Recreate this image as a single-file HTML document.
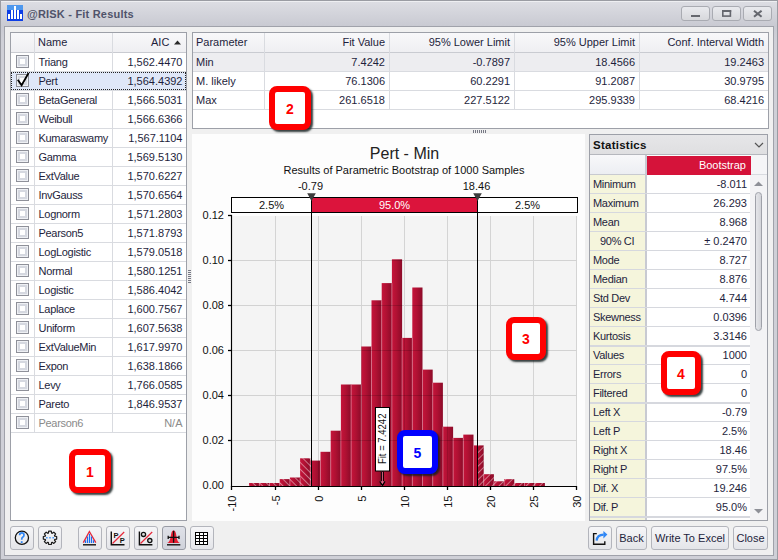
<!DOCTYPE html>
<html><head><meta charset="utf-8">
<style>
*{margin:0;padding:0;box-sizing:border-box}
html,body{width:778px;height:560px;overflow:hidden;background:#d3d4d9;font-family:"Liberation Sans",sans-serif;font-size:11px;color:#1e1e3c}
.a{position:absolute}
#frame{left:0;top:0;width:778px;height:560px;border:1px solid #9a9ca3;background:linear-gradient(#eeeff2 0,#eeeff2 1px,#dcdde3 1px,#c9cad2 25px,#cfd0d7 40px,#cfd0d7)}
#title{left:27px;top:8px;font-weight:bold;font-size:11px;color:#50536a;letter-spacing:0.2px}
.wbtn{top:6px;width:29px;height:15px;border:1px solid #a9abb2;border-radius:3px;background:linear-gradient(#e9eaee,#d7d8dc)}
#content{left:4px;top:26px;width:770px;height:530px;background:#f0f0f0;border:1px solid #a0a2aa}
.grid{background:#fff;border:1px solid #9da0a8}
.hdr{background:linear-gradient(#f8f8fa,#efeff2);border-bottom:1px solid #c9cbd1}
.row{height:19px;border-bottom:1px solid #d9dbe0;white-space:nowrap;line-height:18px}
.cell{position:absolute;top:0;height:18px}
.cb{position:absolute;left:5px;top:2px;width:13px;height:13px;border:1px solid #8e9099;background:#fff;box-shadow:inset 0 0 0 1px #eef0f4,inset 0 0 0 3px #d5d8e0}
.num{text-align:right}
.btn{height:24px;border:1px solid #b3b5bc;border-radius:3px;background:linear-gradient(#f6f6f8,#e4e5e9);text-align:center;line-height:22px;color:#1e1e3c}
.btn.act{background:linear-gradient(#dfe1e8,#d0d3db);border-color:#989ba4}
.callout{border-radius:8px;background:#fff;box-shadow:2px 2px 2px rgba(20,30,30,.85);font-weight:bold;font-size:14px;text-align:center;padding-top:1px}

.lrow{left:11px;width:175px;height:19px;border-bottom:1px solid #d9dbe0;line-height:18px;white-space:nowrap}
.lrow span{top:0}
.lrow.sel{background:#dfe7f8}
.chk{position:absolute;left:6px;top:-1px}
</style></head><body>
<div id="frame" class="a"></div>
<svg class="a" style="left:7px;top:5px" width="16" height="16" viewBox="0 0 16 16">
<defs><linearGradient id="ig" x1="0" y1="0" x2="1" y2="1"><stop offset="0" stop-color="#3d8bf0"/><stop offset="1" stop-color="#0a2fd8"/></linearGradient></defs>
<rect width="16" height="16" fill="#0d3ee6"/><rect width="16" height="5" fill="#4e98ee"/>
<rect x="1" y="9" width="2" height="5" fill="#fff"/><rect x="4" y="5" width="2" height="9" fill="#fff"/><rect x="7" y="1" width="2" height="13" fill="#fff"/><rect x="10" y="5" width="2" height="9" fill="#fff"/><rect x="13" y="9" width="2" height="5" fill="#fff"/>
</svg>
<div id="title" class="a">@RISK - Fit Results</div>
<div class="a wbtn" style="left:681px"></div>
<div class="a wbtn" style="left:712px"></div>
<div class="a wbtn" style="left:743px"></div>
<div id="content" class="a"></div>


<div class="a grid" style="left:10px;top:32px;width:177px;height:489px"></div>
<div class="a hdr" style="left:11px;top:33px;width:175px;height:20px"></div>
<div class="a" style="left:34px;top:33px;width:1px;height:400px;background:#d9dbe0"></div>
<div class="a" style="left:112px;top:33px;width:1px;height:400px;background:#d9dbe0"></div>
<div class="a" style="left:38px;top:33px;line-height:19px">Name</div>
<div class="a" style="left:151px;top:33px;line-height:19px">AIC</div>
<svg class="a" style="left:174px;top:40px" width="7" height="5"><path d="M0 4.5 L3.5 0.5 L7 4.5Z" fill="#2a2a2a"/></svg>
<div id="lrows">
<div class="a lrow" style="top:53px"><div class="cb"></div><span class="a" style="left:27.5px;letter-spacing:-0.3px">Triang</span><span class="a" style="right:3.5px">1,562.4470</span></div>
<div class="a lrow sel" style="top:72px"><div class="cb"></div><svg class="chk" width="16" height="17" viewBox="0 0 16 17"><path d="M0.8 8.8 L4.6 14.3 L11.6 2" stroke="#000" stroke-width="1.8" fill="none"/></svg><span class="a" style="left:27.5px;letter-spacing:-0.3px">Pert</span><span class="a" style="right:3.5px">1,564.4392</span></div>
<div class="a lrow" style="top:91px"><div class="cb"></div><span class="a" style="left:27.5px;letter-spacing:-0.3px">BetaGeneral</span><span class="a" style="right:3.5px">1,566.5031</span></div>
<div class="a lrow" style="top:110px"><div class="cb"></div><span class="a" style="left:27.5px;letter-spacing:-0.3px">Weibull</span><span class="a" style="right:3.5px">1,566.6366</span></div>
<div class="a lrow" style="top:129px"><div class="cb"></div><span class="a" style="left:27.5px;letter-spacing:-0.3px">Kumaraswamy</span><span class="a" style="right:3.5px">1,567.1104</span></div>
<div class="a lrow" style="top:148px"><div class="cb"></div><span class="a" style="left:27.5px;letter-spacing:-0.3px">Gamma</span><span class="a" style="right:3.5px">1,569.5130</span></div>
<div class="a lrow" style="top:167px"><div class="cb"></div><span class="a" style="left:27.5px;letter-spacing:-0.3px">ExtValue</span><span class="a" style="right:3.5px">1,570.6227</span></div>
<div class="a lrow" style="top:186px"><div class="cb"></div><span class="a" style="left:27.5px;letter-spacing:-0.3px">InvGauss</span><span class="a" style="right:3.5px">1,570.6564</span></div>
<div class="a lrow" style="top:205px"><div class="cb"></div><span class="a" style="left:27.5px;letter-spacing:-0.3px">Lognorm</span><span class="a" style="right:3.5px">1,571.2803</span></div>
<div class="a lrow" style="top:224px"><div class="cb"></div><span class="a" style="left:27.5px;letter-spacing:-0.3px">Pearson5</span><span class="a" style="right:3.5px">1,571.8793</span></div>
<div class="a lrow" style="top:243px"><div class="cb"></div><span class="a" style="left:27.5px;letter-spacing:-0.3px">LogLogistic</span><span class="a" style="right:3.5px">1,579.0518</span></div>
<div class="a lrow" style="top:262px"><div class="cb"></div><span class="a" style="left:27.5px;letter-spacing:-0.3px">Normal</span><span class="a" style="right:3.5px">1,580.1251</span></div>
<div class="a lrow" style="top:281px"><div class="cb"></div><span class="a" style="left:27.5px;letter-spacing:-0.3px">Logistic</span><span class="a" style="right:3.5px">1,586.4042</span></div>
<div class="a lrow" style="top:300px"><div class="cb"></div><span class="a" style="left:27.5px;letter-spacing:-0.3px">Laplace</span><span class="a" style="right:3.5px">1,600.7567</span></div>
<div class="a lrow" style="top:319px"><div class="cb"></div><span class="a" style="left:27.5px;letter-spacing:-0.3px">Uniform</span><span class="a" style="right:3.5px">1,607.5638</span></div>
<div class="a lrow" style="top:338px"><div class="cb"></div><span class="a" style="left:27.5px;letter-spacing:-0.3px">ExtValueMin</span><span class="a" style="right:3.5px">1,617.9970</span></div>
<div class="a lrow" style="top:357px"><div class="cb"></div><span class="a" style="left:27.5px;letter-spacing:-0.3px">Expon</span><span class="a" style="right:3.5px">1,638.1866</span></div>
<div class="a lrow" style="top:376px"><div class="cb"></div><span class="a" style="left:27.5px;letter-spacing:-0.3px">Levy</span><span class="a" style="right:3.5px">1,766.0585</span></div>
<div class="a lrow" style="top:395px"><div class="cb"></div><span class="a" style="left:27.5px;letter-spacing:-0.3px">Pareto</span><span class="a" style="right:3.5px">1,846.9537</span></div>
<div class="a lrow" style="top:414px;color:#8a8a8a"><div class="cb"></div><span class="a" style="left:27.5px;letter-spacing:-0.3px">Pearson6</span><span class="a" style="right:3.5px">N/A</span></div>
</div>
<div class="a" style="left:11px;top:72px;width:175px;height:18px;border:1px dotted #222"></div>

<div class="a grid" style="left:192px;top:32px;width:577px;height:97px"></div>
<div class="a hdr" style="left:193px;top:33px;width:575px;height:20px"></div>
<div class="a" style="left:193px;top:53px;width:575px;height:18px;background:#ededf0"></div>
<div class="a" style="left:264px;top:33px;width:1px;height:76px;background:#d9dbe0"></div>
<div class="a" style="left:389px;top:33px;width:1px;height:76px;background:#d9dbe0"></div>
<div class="a" style="left:514px;top:33px;width:1px;height:76px;background:#d9dbe0"></div>
<div class="a" style="left:639px;top:33px;width:1px;height:76px;background:#d9dbe0"></div>
<div class="a" style="left:193px;top:71px;width:575px;height:1px;background:#d9dbe0"></div>
<div class="a" style="left:193px;top:90px;width:575px;height:1px;background:#d9dbe0"></div>
<div class="a" style="left:193px;top:109px;width:575px;height:1px;background:#d9dbe0"></div>
<div class="a" style="left:196px;top:33px;line-height:19px">Parameter</div>
<div class="a" style="left:264px;width:121px;top:33px;line-height:19px;text-align:right">Fit Value</div>
<div class="a" style="left:389px;width:121px;top:33px;line-height:19px;text-align:right">95% Lower Limit</div>
<div class="a" style="left:514px;width:121px;top:33px;line-height:19px;text-align:right">95% Upper Limit</div>
<div class="a" style="left:639px;width:125px;top:33px;line-height:19px;text-align:right">Conf. Interval Width</div>
<div class="a" style="left:196px;top:53px;line-height:19px">Min</div>
<div class="a" style="left:264px;width:121px;top:53px;line-height:19px;text-align:right">7.4242</div>
<div class="a" style="left:389px;width:121px;top:53px;line-height:19px;text-align:right">-0.7897</div>
<div class="a" style="left:514px;width:121px;top:53px;line-height:19px;text-align:right">18.4566</div>
<div class="a" style="left:639px;width:125px;top:53px;line-height:19px;text-align:right">19.2463</div>
<div class="a" style="left:196px;top:72px;line-height:19px">M. likely</div>
<div class="a" style="left:264px;width:121px;top:72px;line-height:19px;text-align:right">76.1306</div>
<div class="a" style="left:389px;width:121px;top:72px;line-height:19px;text-align:right">60.2291</div>
<div class="a" style="left:514px;width:121px;top:72px;line-height:19px;text-align:right">91.2087</div>
<div class="a" style="left:639px;width:125px;top:72px;line-height:19px;text-align:right">30.9795</div>
<div class="a" style="left:196px;top:91px;line-height:19px">Max</div>
<div class="a" style="left:264px;width:121px;top:91px;line-height:19px;text-align:right">261.6518</div>
<div class="a" style="left:389px;width:121px;top:91px;line-height:19px;text-align:right">227.5122</div>
<div class="a" style="left:514px;width:121px;top:91px;line-height:19px;text-align:right">295.9339</div>
<div class="a" style="left:639px;width:125px;top:91px;line-height:19px;text-align:right">68.4216</div>
<!--CHART--><svg class="a" style="left:0;top:0" width="778" height="560" viewBox="0 0 778 560">
<defs>
<linearGradient id="bg" x1="0" y1="0" x2="1" y2="0"><stop offset="0" stop-color="#c6133a"/><stop offset="0.45" stop-color="#b01133"/><stop offset="1" stop-color="#8c0b29"/></linearGradient>
<pattern id="hatchL" patternUnits="userSpaceOnUse" width="4.8" height="6" patternTransform="rotate(-45)"><rect x="0" y="0" width="0.9" height="6" fill="#fff" fill-opacity="0.48"/></pattern>
<pattern id="hatchR" patternUnits="userSpaceOnUse" width="4.8" height="6" patternTransform="rotate(45)"><rect x="0" y="0" width="0.9" height="6" fill="#fff" fill-opacity="0.48"/></pattern>
<clipPath id="cl"><rect x="232" y="200" width="79" height="286"/></clipPath>
<clipPath id="cr"><rect x="478" y="200" width="100" height="286"/></clipPath>
</defs>
<rect x="192" y="134" width="393" height="387" fill="#fdfdfd"/>
<rect x="232" y="216" width="345" height="270" fill="#f4f4f4"/>
<line x1="275.5" y1="216" x2="275.5" y2="486" stroke="#d4d4d4" stroke-width="1"/>
<line x1="318.5" y1="216" x2="318.5" y2="486" stroke="#d4d4d4" stroke-width="1"/>
<line x1="361.5" y1="216" x2="361.5" y2="486" stroke="#d4d4d4" stroke-width="1"/>
<line x1="404.5" y1="216" x2="404.5" y2="486" stroke="#d4d4d4" stroke-width="1"/>
<line x1="447.5" y1="216" x2="447.5" y2="486" stroke="#d4d4d4" stroke-width="1"/>
<line x1="490.5" y1="216" x2="490.5" y2="486" stroke="#d4d4d4" stroke-width="1"/>
<line x1="533.5" y1="216" x2="533.5" y2="486" stroke="#d4d4d4" stroke-width="1"/>
<line x1="576.5" y1="216" x2="576.5" y2="486" stroke="#d4d4d4" stroke-width="1"/>
<line x1="232" y1="440.5" x2="577" y2="440.5" stroke="#d2d2d2" stroke-width="1"/>
<line x1="232" y1="395.5" x2="577" y2="395.5" stroke="#d2d2d2" stroke-width="1"/>
<line x1="232" y1="350.5" x2="577" y2="350.5" stroke="#d2d2d2" stroke-width="1"/>
<line x1="232" y1="305.5" x2="577" y2="305.5" stroke="#d2d2d2" stroke-width="1"/>
<line x1="232" y1="260.5" x2="577" y2="260.5" stroke="#d2d2d2" stroke-width="1"/>
<g><rect x="249.10" y="483.0" width="10.20" height="3.0" fill="url(#bg)"/><rect x="259.30" y="483.0" width="10.20" height="3.0" fill="url(#bg)"/><rect x="269.50" y="483.0" width="10.20" height="3.0" fill="url(#bg)"/><rect x="279.70" y="479.1" width="10.20" height="6.9" fill="url(#bg)"/><rect x="289.90" y="477.5" width="10.20" height="8.5" fill="url(#bg)"/><rect x="300.10" y="458.3" width="10.20" height="27.7" fill="url(#bg)"/><rect x="310.30" y="460.6" width="10.20" height="25.4" fill="url(#bg)"/><rect x="320.50" y="451.8" width="10.20" height="34.2" fill="url(#bg)"/><rect x="330.70" y="430.7" width="10.20" height="55.3" fill="url(#bg)"/><rect x="340.90" y="384.5" width="10.20" height="101.5" fill="url(#bg)"/><rect x="351.10" y="384.5" width="10.20" height="101.5" fill="url(#bg)"/><rect x="361.30" y="346.5" width="10.20" height="139.5" fill="url(#bg)"/><rect x="371.50" y="300.3" width="10.20" height="185.7" fill="url(#bg)"/><rect x="381.70" y="283.1" width="10.20" height="202.9" fill="url(#bg)"/><rect x="391.90" y="259.3" width="10.20" height="226.7" fill="url(#bg)"/><rect x="402.10" y="337.9" width="10.20" height="148.1" fill="url(#bg)"/><rect x="412.30" y="287.5" width="10.20" height="198.5" fill="url(#bg)"/><rect x="422.50" y="369.6" width="10.20" height="116.4" fill="url(#bg)"/><rect x="432.70" y="382.7" width="10.20" height="103.3" fill="url(#bg)"/><rect x="442.90" y="426.7" width="10.20" height="59.3" fill="url(#bg)"/><rect x="453.10" y="437.9" width="10.20" height="48.1" fill="url(#bg)"/><rect x="463.30" y="434.6" width="10.20" height="51.4" fill="url(#bg)"/><rect x="473.50" y="445.4" width="10.20" height="40.6" fill="url(#bg)"/><rect x="483.70" y="474.2" width="10.20" height="11.8" fill="url(#bg)"/><rect x="493.90" y="481.3" width="10.20" height="4.7" fill="url(#bg)"/><rect x="504.10" y="479.2" width="10.20" height="6.8" fill="url(#bg)"/><rect x="514.30" y="483.0" width="10.20" height="3.0" fill="url(#bg)"/><rect x="524.50" y="483.0" width="10.20" height="3.0" fill="url(#bg)"/><rect x="534.70" y="483.0" width="10.20" height="3.0" fill="url(#bg)"/></g>
<g><rect x="258.80" y="483.0" width="1" height="3.0" fill="#d87890" fill-opacity="0.75"/><rect x="269.00" y="483.0" width="1" height="3.0" fill="#d87890" fill-opacity="0.75"/><rect x="279.20" y="483.0" width="1" height="3.0" fill="#d87890" fill-opacity="0.75"/><rect x="289.40" y="479.1" width="1" height="6.9" fill="#d87890" fill-opacity="0.75"/><rect x="299.60" y="477.5" width="1" height="8.5" fill="#d87890" fill-opacity="0.75"/><rect x="309.80" y="460.6" width="1" height="25.4" fill="#d87890" fill-opacity="0.75"/><rect x="320.00" y="460.6" width="1" height="25.4" fill="#d87890" fill-opacity="0.75"/><rect x="330.20" y="451.8" width="1" height="34.2" fill="#d87890" fill-opacity="0.75"/><rect x="340.40" y="430.7" width="1" height="55.3" fill="#d87890" fill-opacity="0.75"/><rect x="350.60" y="384.5" width="1" height="101.5" fill="#d87890" fill-opacity="0.75"/><rect x="360.80" y="384.5" width="1" height="101.5" fill="#d87890" fill-opacity="0.75"/><rect x="371.00" y="346.5" width="1" height="139.5" fill="#d87890" fill-opacity="0.75"/><rect x="381.20" y="300.3" width="1" height="185.7" fill="#d87890" fill-opacity="0.75"/><rect x="391.40" y="283.1" width="1" height="202.9" fill="#d87890" fill-opacity="0.75"/><rect x="401.60" y="337.9" width="1" height="148.1" fill="#d87890" fill-opacity="0.75"/><rect x="411.80" y="337.9" width="1" height="148.1" fill="#d87890" fill-opacity="0.75"/><rect x="422.00" y="369.6" width="1" height="116.4" fill="#d87890" fill-opacity="0.75"/><rect x="432.20" y="382.7" width="1" height="103.3" fill="#d87890" fill-opacity="0.75"/><rect x="442.40" y="426.7" width="1" height="59.3" fill="#d87890" fill-opacity="0.75"/><rect x="452.60" y="437.9" width="1" height="48.1" fill="#d87890" fill-opacity="0.75"/><rect x="462.80" y="437.9" width="1" height="48.1" fill="#d87890" fill-opacity="0.75"/><rect x="473.00" y="445.4" width="1" height="40.6" fill="#d87890" fill-opacity="0.75"/><rect x="483.20" y="474.2" width="1" height="11.8" fill="#d87890" fill-opacity="0.75"/><rect x="493.40" y="481.3" width="1" height="4.7" fill="#d87890" fill-opacity="0.75"/><rect x="503.60" y="481.3" width="1" height="4.7" fill="#d87890" fill-opacity="0.75"/><rect x="513.80" y="483.0" width="1" height="3.0" fill="#d87890" fill-opacity="0.75"/><rect x="524.00" y="483.0" width="1" height="3.0" fill="#d87890" fill-opacity="0.75"/><rect x="534.20" y="483.0" width="1" height="3.0" fill="#d87890" fill-opacity="0.75"/></g>
<g clip-path="url(#cl)"><rect x="249.10" y="483.0" width="10.20" height="3.0" fill="url(#hatchL)"/><rect x="259.30" y="483.0" width="10.20" height="3.0" fill="url(#hatchL)"/><rect x="269.50" y="483.0" width="10.20" height="3.0" fill="url(#hatchL)"/><rect x="279.70" y="479.1" width="10.20" height="6.9" fill="url(#hatchL)"/><rect x="289.90" y="477.5" width="10.20" height="8.5" fill="url(#hatchL)"/><rect x="300.10" y="458.3" width="10.20" height="27.7" fill="url(#hatchL)"/><rect x="310.30" y="460.6" width="10.20" height="25.4" fill="url(#hatchL)"/><rect x="320.50" y="451.8" width="10.20" height="34.2" fill="url(#hatchL)"/><rect x="330.70" y="430.7" width="10.20" height="55.3" fill="url(#hatchL)"/><rect x="340.90" y="384.5" width="10.20" height="101.5" fill="url(#hatchL)"/><rect x="351.10" y="384.5" width="10.20" height="101.5" fill="url(#hatchL)"/><rect x="361.30" y="346.5" width="10.20" height="139.5" fill="url(#hatchL)"/><rect x="371.50" y="300.3" width="10.20" height="185.7" fill="url(#hatchL)"/><rect x="381.70" y="283.1" width="10.20" height="202.9" fill="url(#hatchL)"/><rect x="391.90" y="259.3" width="10.20" height="226.7" fill="url(#hatchL)"/><rect x="402.10" y="337.9" width="10.20" height="148.1" fill="url(#hatchL)"/><rect x="412.30" y="287.5" width="10.20" height="198.5" fill="url(#hatchL)"/><rect x="422.50" y="369.6" width="10.20" height="116.4" fill="url(#hatchL)"/><rect x="432.70" y="382.7" width="10.20" height="103.3" fill="url(#hatchL)"/><rect x="442.90" y="426.7" width="10.20" height="59.3" fill="url(#hatchL)"/><rect x="453.10" y="437.9" width="10.20" height="48.1" fill="url(#hatchL)"/><rect x="463.30" y="434.6" width="10.20" height="51.4" fill="url(#hatchL)"/><rect x="473.50" y="445.4" width="10.20" height="40.6" fill="url(#hatchL)"/><rect x="483.70" y="474.2" width="10.20" height="11.8" fill="url(#hatchL)"/><rect x="493.90" y="481.3" width="10.20" height="4.7" fill="url(#hatchL)"/><rect x="504.10" y="479.2" width="10.20" height="6.8" fill="url(#hatchL)"/><rect x="514.30" y="483.0" width="10.20" height="3.0" fill="url(#hatchL)"/><rect x="524.50" y="483.0" width="10.20" height="3.0" fill="url(#hatchL)"/><rect x="534.70" y="483.0" width="10.20" height="3.0" fill="url(#hatchL)"/></g>
<g clip-path="url(#cr)"><rect x="249.10" y="483.0" width="10.20" height="3.0" fill="url(#hatchR)"/><rect x="259.30" y="483.0" width="10.20" height="3.0" fill="url(#hatchR)"/><rect x="269.50" y="483.0" width="10.20" height="3.0" fill="url(#hatchR)"/><rect x="279.70" y="479.1" width="10.20" height="6.9" fill="url(#hatchR)"/><rect x="289.90" y="477.5" width="10.20" height="8.5" fill="url(#hatchR)"/><rect x="300.10" y="458.3" width="10.20" height="27.7" fill="url(#hatchR)"/><rect x="310.30" y="460.6" width="10.20" height="25.4" fill="url(#hatchR)"/><rect x="320.50" y="451.8" width="10.20" height="34.2" fill="url(#hatchR)"/><rect x="330.70" y="430.7" width="10.20" height="55.3" fill="url(#hatchR)"/><rect x="340.90" y="384.5" width="10.20" height="101.5" fill="url(#hatchR)"/><rect x="351.10" y="384.5" width="10.20" height="101.5" fill="url(#hatchR)"/><rect x="361.30" y="346.5" width="10.20" height="139.5" fill="url(#hatchR)"/><rect x="371.50" y="300.3" width="10.20" height="185.7" fill="url(#hatchR)"/><rect x="381.70" y="283.1" width="10.20" height="202.9" fill="url(#hatchR)"/><rect x="391.90" y="259.3" width="10.20" height="226.7" fill="url(#hatchR)"/><rect x="402.10" y="337.9" width="10.20" height="148.1" fill="url(#hatchR)"/><rect x="412.30" y="287.5" width="10.20" height="198.5" fill="url(#hatchR)"/><rect x="422.50" y="369.6" width="10.20" height="116.4" fill="url(#hatchR)"/><rect x="432.70" y="382.7" width="10.20" height="103.3" fill="url(#hatchR)"/><rect x="442.90" y="426.7" width="10.20" height="59.3" fill="url(#hatchR)"/><rect x="453.10" y="437.9" width="10.20" height="48.1" fill="url(#hatchR)"/><rect x="463.30" y="434.6" width="10.20" height="51.4" fill="url(#hatchR)"/><rect x="473.50" y="445.4" width="10.20" height="40.6" fill="url(#hatchR)"/><rect x="483.70" y="474.2" width="10.20" height="11.8" fill="url(#hatchR)"/><rect x="493.90" y="481.3" width="10.20" height="4.7" fill="url(#hatchR)"/><rect x="504.10" y="479.2" width="10.20" height="6.8" fill="url(#hatchR)"/><rect x="514.30" y="483.0" width="10.20" height="3.0" fill="url(#hatchR)"/><rect x="524.50" y="483.0" width="10.20" height="3.0" fill="url(#hatchR)"/><rect x="534.70" y="483.0" width="10.20" height="3.0" fill="url(#hatchR)"/></g>
<clipPath id="cbars"><rect x="249.10" y="483.0" width="10.20" height="3.0"/><rect x="259.30" y="483.0" width="10.20" height="3.0"/><rect x="269.50" y="483.0" width="10.20" height="3.0"/><rect x="279.70" y="479.1" width="10.20" height="6.9"/><rect x="289.90" y="477.5" width="10.20" height="8.5"/><rect x="300.10" y="458.3" width="10.20" height="27.7"/><rect x="310.30" y="460.6" width="10.20" height="25.4"/><rect x="320.50" y="451.8" width="10.20" height="34.2"/><rect x="330.70" y="430.7" width="10.20" height="55.3"/><rect x="340.90" y="384.5" width="10.20" height="101.5"/><rect x="351.10" y="384.5" width="10.20" height="101.5"/><rect x="361.30" y="346.5" width="10.20" height="139.5"/><rect x="371.50" y="300.3" width="10.20" height="185.7"/><rect x="381.70" y="283.1" width="10.20" height="202.9"/><rect x="391.90" y="259.3" width="10.20" height="226.7"/><rect x="402.10" y="337.9" width="10.20" height="148.1"/><rect x="412.30" y="287.5" width="10.20" height="198.5"/><rect x="422.50" y="369.6" width="10.20" height="116.4"/><rect x="432.70" y="382.7" width="10.20" height="103.3"/><rect x="442.90" y="426.7" width="10.20" height="59.3"/><rect x="453.10" y="437.9" width="10.20" height="48.1"/><rect x="463.30" y="434.6" width="10.20" height="51.4"/><rect x="473.50" y="445.4" width="10.20" height="40.6"/><rect x="483.70" y="474.2" width="10.20" height="11.8"/><rect x="493.90" y="481.3" width="10.20" height="4.7"/><rect x="504.10" y="479.2" width="10.20" height="6.8"/><rect x="514.30" y="483.0" width="10.20" height="3.0"/><rect x="524.50" y="483.0" width="10.20" height="3.0"/><rect x="534.70" y="483.0" width="10.20" height="3.0"/></clipPath>
<g clip-path="url(#cbars)">
<line x1="232" y1="440.5" x2="577" y2="440.5" stroke="#000" stroke-opacity="0.15" stroke-width="1"/>
<line x1="232" y1="395.5" x2="577" y2="395.5" stroke="#000" stroke-opacity="0.15" stroke-width="1"/>
<line x1="232" y1="350.5" x2="577" y2="350.5" stroke="#000" stroke-opacity="0.15" stroke-width="1"/>
<line x1="232" y1="305.5" x2="577" y2="305.5" stroke="#000" stroke-opacity="0.15" stroke-width="1"/>
<line x1="232" y1="260.5" x2="577" y2="260.5" stroke="#000" stroke-opacity="0.15" stroke-width="1"/>
<line x1="275.5" y1="216" x2="275.5" y2="486" stroke="#000" stroke-opacity="0.12" stroke-width="1"/>
<line x1="318.5" y1="216" x2="318.5" y2="486" stroke="#000" stroke-opacity="0.12" stroke-width="1"/>
<line x1="361.5" y1="216" x2="361.5" y2="486" stroke="#000" stroke-opacity="0.12" stroke-width="1"/>
<line x1="404.5" y1="216" x2="404.5" y2="486" stroke="#000" stroke-opacity="0.12" stroke-width="1"/>
<line x1="447.5" y1="216" x2="447.5" y2="486" stroke="#000" stroke-opacity="0.12" stroke-width="1"/>
<line x1="490.5" y1="216" x2="490.5" y2="486" stroke="#000" stroke-opacity="0.12" stroke-width="1"/>
<line x1="533.5" y1="216" x2="533.5" y2="486" stroke="#000" stroke-opacity="0.12" stroke-width="1"/>
</g>
<line x1="231.5" y1="215" x2="231.5" y2="487" stroke="#000" stroke-width="1.15"/>
<line x1="231" y1="486.5" x2="577" y2="486.5" stroke="#000" stroke-width="1.15"/>
<line x1="231.5" y1="486" x2="231.5" y2="490" stroke="#000" stroke-width="1.3"/>
<text transform="translate(235.5,495.5) rotate(-90)" text-anchor="end" font-size="11" fill="#111">-10</text>
<line x1="275.5" y1="486" x2="275.5" y2="490" stroke="#000" stroke-width="1.3"/>
<text transform="translate(279.5,495.5) rotate(-90)" text-anchor="end" font-size="11" fill="#111">-5</text>
<line x1="318.5" y1="486" x2="318.5" y2="490" stroke="#000" stroke-width="1.3"/>
<text transform="translate(322.5,495.5) rotate(-90)" text-anchor="end" font-size="11" fill="#111">0</text>
<line x1="361.5" y1="486" x2="361.5" y2="490" stroke="#000" stroke-width="1.3"/>
<text transform="translate(365.5,495.5) rotate(-90)" text-anchor="end" font-size="11" fill="#111">5</text>
<line x1="404.5" y1="486" x2="404.5" y2="490" stroke="#000" stroke-width="1.3"/>
<text transform="translate(408.5,495.5) rotate(-90)" text-anchor="end" font-size="11" fill="#111">10</text>
<line x1="447.5" y1="486" x2="447.5" y2="490" stroke="#000" stroke-width="1.3"/>
<text transform="translate(451.5,495.5) rotate(-90)" text-anchor="end" font-size="11" fill="#111">15</text>
<line x1="490.5" y1="486" x2="490.5" y2="490" stroke="#000" stroke-width="1.3"/>
<text transform="translate(494.5,495.5) rotate(-90)" text-anchor="end" font-size="11" fill="#111">20</text>
<line x1="533.5" y1="486" x2="533.5" y2="490" stroke="#000" stroke-width="1.3"/>
<text transform="translate(537.5,495.5) rotate(-90)" text-anchor="end" font-size="11" fill="#111">25</text>
<line x1="576.5" y1="486" x2="576.5" y2="490" stroke="#000" stroke-width="1.3"/>
<text transform="translate(580.5,495.5) rotate(-90)" text-anchor="end" font-size="11" fill="#111">30</text>
<text x="224" y="489.3" text-anchor="end" font-size="11" fill="#111">0.00</text>
<line x1="228" y1="440.5" x2="232" y2="440.5" stroke="#000" stroke-width="1.3"/>
<text x="224" y="444.3" text-anchor="end" font-size="11" fill="#111">0.02</text>
<line x1="228" y1="395.5" x2="232" y2="395.5" stroke="#000" stroke-width="1.3"/>
<text x="224" y="399.3" text-anchor="end" font-size="11" fill="#111">0.04</text>
<line x1="228" y1="350.5" x2="232" y2="350.5" stroke="#000" stroke-width="1.3"/>
<text x="224" y="354.3" text-anchor="end" font-size="11" fill="#111">0.06</text>
<line x1="228" y1="305.5" x2="232" y2="305.5" stroke="#000" stroke-width="1.3"/>
<text x="224" y="309.3" text-anchor="end" font-size="11" fill="#111">0.08</text>
<line x1="228" y1="260.5" x2="232" y2="260.5" stroke="#000" stroke-width="1.3"/>
<text x="224" y="264.3" text-anchor="end" font-size="11" fill="#111">0.10</text>
<line x1="228" y1="215.5" x2="232" y2="215.5" stroke="#000" stroke-width="1.3"/>
<text x="224" y="219.3" text-anchor="end" font-size="11" fill="#111">0.12</text>
<rect x="231.5" y="197.5" width="346" height="15" fill="#fff" stroke="#000" stroke-width="1"/>
<rect x="311.5" y="198" width="166" height="14" fill="#dc143c"/>
<text x="271.5" y="208.6" text-anchor="middle" font-size="11" fill="#111">2.5%</text>
<text x="394.5" y="208.6" text-anchor="middle" font-size="11" fill="#fff">95.0%</text>
<text x="527.5" y="208.6" text-anchor="middle" font-size="11" fill="#111">2.5%</text>
<line x1="311.5" y1="197" x2="311.5" y2="486" stroke="#000" stroke-width="1"/>
<path d="M307.2 193.2 L315.8 193.2 L311.5 201 Z" fill="#3c3c3c"/>
<text x="310.5" y="189.5" text-anchor="middle" font-size="11" fill="#111">-0.79</text>
<line x1="477.5" y1="197" x2="477.5" y2="486" stroke="#000" stroke-width="1"/>
<path d="M473.2 193.2 L481.8 193.2 L477.5 201 Z" fill="#3c3c3c"/>
<text x="476.5" y="189.5" text-anchor="middle" font-size="11" fill="#111">18.46</text>
<text x="404.5" y="158.6" text-anchor="middle" font-size="16" fill="#222">Pert - Min</text>
<text x="404" y="174.4" text-anchor="middle" font-size="11" fill="#111">Results of Parametric Bootstrap of 1000 Samples</text>
<path d="M382.4 471.5 V485" stroke="#000" stroke-width="3"/>
<path d="M379.8 481.3 L382.4 485.5 L385 481.3" stroke="#000" stroke-width="1.3" fill="#e06b8a"/>
<path d="M382.4 472 V483" stroke="#e06b8a" stroke-width="1"/>
<rect x="375.5" y="407.5" width="14" height="63.5" fill="#fff" stroke="#000" stroke-width="1"/>
<text transform="translate(386.3,438.8) rotate(-90)" text-anchor="middle" font-size="11" fill="#111" textLength="50.5" lengthAdjust="spacingAndGlyphs">Fit = 7.4242</text>
<rect x="473" y="130" width="1" height="3" fill="#767884"/>
<rect x="188" y="270" width="3" height="1" fill="#767884"/>
<rect x="475" y="130" width="1" height="3" fill="#767884"/>
<rect x="188" y="272" width="3" height="1" fill="#767884"/>
<rect x="477" y="130" width="1" height="3" fill="#767884"/>
<rect x="188" y="274" width="3" height="1" fill="#767884"/>
<rect x="479" y="130" width="1" height="3" fill="#767884"/>
<rect x="188" y="276" width="3" height="1" fill="#767884"/>
<rect x="481" y="130" width="1" height="3" fill="#767884"/>
<rect x="188" y="278" width="3" height="1" fill="#767884"/>
<rect x="483" y="130" width="1" height="3" fill="#767884"/>
<rect x="188" y="280" width="3" height="1" fill="#767884"/>
<rect x="485" y="130" width="1" height="3" fill="#767884"/>
<rect x="188" y="282" width="3" height="1" fill="#767884"/>
</svg><!--/CHART-->
<!--STATS--><div class="a" style="left:589px;top:134px;width:179px;height:387px;border:1px solid #9da0a8;background:#fff"></div>
<div class="a" style="left:590px;top:135px;width:177px;height:20px;background:linear-gradient(#e6e6e8,#dfdfe1);border-bottom:1px solid #b5b7bd"></div>
<div class="a" style="left:593px;top:135px;line-height:20px;font-weight:bold;font-size:11.5px;letter-spacing:0.25px;color:#111">Statistics</div>
<svg class="a" style="left:754px;top:142px" width="10" height="7"><path d="M1 1 L5 5 L9 1" stroke="#555" stroke-width="1.2" fill="none"/></svg>
<div class="a" style="left:590px;top:155px;width:55px;height:20px;background:linear-gradient(#f8f8fa,#eceef2);border-bottom:1px solid #c8cad0"></div>
<div class="a" style="left:647px;top:156px;width:104px;height:19px;background:#d5133a;color:#fff;text-align:right;padding-right:5px;line-height:18px">Bootstrap</div>
<div class="a" style="left:751px;top:155px;width:16px;height:20px;background:#f5f5f7;border-bottom:1px solid #d8dadf"></div>
<div class="a" style="left:590px;top:175px;width:55px;height:345px;background:#f5f5dc"></div>
<div class="a" style="left:645px;top:155px;width:2px;height:365px;background:#c8cad2"></div>
<div class="a" style="left:593px;top:175px;line-height:18px;letter-spacing:-0.3px">Minimum</div>
<div class="a" style="left:647px;width:100px;top:175px;line-height:18px;text-align:right">-8.011</div>
<div class="a" style="left:590px;top:193px;width:160px;height:1px;background:#d6d8de"></div>
<div class="a" style="left:593px;top:194px;line-height:18px;letter-spacing:-0.3px">Maximum</div>
<div class="a" style="left:647px;width:100px;top:194px;line-height:18px;text-align:right">26.293</div>
<div class="a" style="left:590px;top:212px;width:160px;height:1px;background:#d6d8de"></div>
<div class="a" style="left:593px;top:213px;line-height:18px;letter-spacing:-0.3px">Mean</div>
<div class="a" style="left:647px;width:100px;top:213px;line-height:18px;text-align:right">8.968</div>
<div class="a" style="left:590px;top:231px;width:160px;height:1px;background:#d6d8de"></div>
<div class="a" style="left:600px;top:232px;line-height:18px;letter-spacing:-0.3px">90% CI</div>
<div class="a" style="left:647px;width:100px;top:232px;line-height:18px;text-align:right">&#177; 0.2470</div>
<div class="a" style="left:590px;top:250px;width:160px;height:1px;background:#d6d8de"></div>
<div class="a" style="left:593px;top:251px;line-height:18px;letter-spacing:-0.3px">Mode</div>
<div class="a" style="left:647px;width:100px;top:251px;line-height:18px;text-align:right">8.727</div>
<div class="a" style="left:590px;top:269px;width:160px;height:1px;background:#d6d8de"></div>
<div class="a" style="left:593px;top:270px;line-height:18px;letter-spacing:-0.3px">Median</div>
<div class="a" style="left:647px;width:100px;top:270px;line-height:18px;text-align:right">8.876</div>
<div class="a" style="left:590px;top:288px;width:160px;height:1px;background:#d6d8de"></div>
<div class="a" style="left:593px;top:289px;line-height:18px;letter-spacing:-0.3px">Std Dev</div>
<div class="a" style="left:647px;width:100px;top:289px;line-height:18px;text-align:right">4.744</div>
<div class="a" style="left:590px;top:307px;width:160px;height:1px;background:#d6d8de"></div>
<div class="a" style="left:593px;top:308px;line-height:18px;letter-spacing:-0.3px">Skewness</div>
<div class="a" style="left:647px;width:100px;top:308px;line-height:18px;text-align:right">0.0396</div>
<div class="a" style="left:590px;top:326px;width:160px;height:1px;background:#d6d8de"></div>
<div class="a" style="left:593px;top:327px;line-height:18px;letter-spacing:-0.3px">Kurtosis</div>
<div class="a" style="left:647px;width:100px;top:327px;line-height:18px;text-align:right">3.3146</div>
<div class="a" style="left:590px;top:345px;width:160px;height:2px;background:#d6d8de"></div>
<div class="a" style="left:593px;top:346px;line-height:18px;letter-spacing:-0.3px">Values</div>
<div class="a" style="left:647px;width:100px;top:346px;line-height:18px;text-align:right">1000</div>
<div class="a" style="left:590px;top:364px;width:160px;height:1px;background:#d6d8de"></div>
<div class="a" style="left:593px;top:365px;line-height:18px;letter-spacing:-0.3px">Errors</div>
<div class="a" style="left:647px;width:100px;top:365px;line-height:18px;text-align:right">0</div>
<div class="a" style="left:590px;top:383px;width:160px;height:1px;background:#d6d8de"></div>
<div class="a" style="left:593px;top:384px;line-height:18px;letter-spacing:-0.3px">Filtered</div>
<div class="a" style="left:647px;width:100px;top:384px;line-height:18px;text-align:right">0</div>
<div class="a" style="left:590px;top:402px;width:160px;height:2px;background:#d6d8de"></div>
<div class="a" style="left:593px;top:403px;line-height:18px;letter-spacing:-0.3px">Left X</div>
<div class="a" style="left:647px;width:100px;top:403px;line-height:18px;text-align:right">-0.79</div>
<div class="a" style="left:590px;top:421px;width:160px;height:1px;background:#d6d8de"></div>
<div class="a" style="left:593px;top:422px;line-height:18px;letter-spacing:-0.3px">Left P</div>
<div class="a" style="left:647px;width:100px;top:422px;line-height:18px;text-align:right">2.5%</div>
<div class="a" style="left:590px;top:440px;width:160px;height:1px;background:#d6d8de"></div>
<div class="a" style="left:593px;top:441px;line-height:18px;letter-spacing:-0.3px">Right X</div>
<div class="a" style="left:647px;width:100px;top:441px;line-height:18px;text-align:right">18.46</div>
<div class="a" style="left:590px;top:459px;width:160px;height:1px;background:#d6d8de"></div>
<div class="a" style="left:593px;top:460px;line-height:18px;letter-spacing:-0.3px">Right P</div>
<div class="a" style="left:647px;width:100px;top:460px;line-height:18px;text-align:right">97.5%</div>
<div class="a" style="left:590px;top:478px;width:160px;height:1px;background:#d6d8de"></div>
<div class="a" style="left:593px;top:479px;line-height:18px;letter-spacing:-0.3px">Dif. X</div>
<div class="a" style="left:647px;width:100px;top:479px;line-height:18px;text-align:right">19.246</div>
<div class="a" style="left:590px;top:497px;width:160px;height:1px;background:#d6d8de"></div>
<div class="a" style="left:593px;top:498px;line-height:18px;letter-spacing:-0.3px">Dif. P</div>
<div class="a" style="left:647px;width:100px;top:498px;line-height:18px;text-align:right">95.0%</div>
<div class="a" style="left:590px;top:516px;width:160px;height:1px;background:#d6d8de"></div>
<div class="a" style="left:750px;top:175px;width:17px;height:345px;background:#f3f3f5"></div>
<svg class="a" style="left:754px;top:181px" width="9" height="5"><path d="M0 5 L4.5 0.5 L9 5Z" fill="#8e9097"/></svg>
<div class="a" style="left:755px;top:192px;width:7px;height:139px;border:1px solid #9fa1a9;border-radius:4px;background:linear-gradient(90deg,#e4e5e9,#d3d4d9)"></div>
<svg class="a" style="left:754px;top:509px" width="9" height="5"><path d="M0 0 L4.5 4.5 L9 0Z" fill="#8e9097"/></svg>
<div class="a" style="left:590px;top:516px;width:160px;height:2px;background:#d6d8de"></div><!--/STATS-->
<!--BTNS--><div class="a btn" style="left:10px;top:526px;width:24px"></div>
<div class="a btn" style="left:38px;top:526px;width:24px"></div>
<div class="a btn" style="left:78px;top:526px;width:24px"></div>
<div class="a btn" style="left:106px;top:526px;width:24px"></div>
<div class="a btn" style="left:134px;top:526px;width:24px"></div>
<div class="a btn" style="left:190px;top:526px;width:24px"></div>
<div class="a btn act" style="left:162px;top:526px;width:24px"></div>
<div class="a btn" style="left:588px;top:526px;width:24px"></div>
<div class="a btn" style="left:616px;top:526px;width:31px">Back</div>
<div class="a btn" style="left:651px;top:526px;width:78px">Write To Excel</div>
<div class="a btn" style="left:733px;top:526px;width:35px">Close</div>
<svg class="a" style="left:0;top:0" width="778" height="560" viewBox="0 0 778 560">
<circle cx="21.9" cy="537.8" r="6.6" stroke="#111" stroke-width="1.3" fill="none"/>
<path d="M19.6 535.3 Q19.6 532.9 21.8 532.9 Q24 532.9 24 535 Q24 536.5 22.6 537.3 Q21.7 537.9 21.7 539.8" stroke="#2f86f5" stroke-width="1.7" fill="none"/><rect x="20.8" y="541.2" width="1.8" height="1.8" fill="#2f86f5"/>
<path d="M48.41 533.06 L48.70 531.12 L51.30 531.12 L51.59 533.06 L52.23 533.33 L53.80 532.16 L55.64 534.00 L54.47 535.57 L54.74 536.21 L56.68 536.50 L56.68 539.10 L54.74 539.39 L54.47 540.03 L55.64 541.60 L53.80 543.44 L52.23 542.27 L51.59 542.54 L51.30 544.48 L48.70 544.48 L48.41 542.54 L47.77 542.27 L46.20 543.44 L44.36 541.60 L45.53 540.03 L45.26 539.39 L43.32 539.10 L43.32 536.50 L45.26 536.21 L45.53 535.57 L44.36 534.00 L46.20 532.16 L47.77 533.33 Z" stroke="#1a1a1a" stroke-width="1.2" stroke-linejoin="round" fill="none"/>
<path d="M46 537.8 H47.6 M49.2 537.8 H50.8 M52.4 537.8 H54" stroke="#4a9af5" stroke-width="1.4"/>
<path d="M83.3 542.6 L89.4 531.5 L95.8 542.6" stroke="#e8283a" stroke-width="1.3" fill="none"/>
<path d="M85.5 543 V540.3 M87.5 543 V536.5 M89.5 543 V533.8 M91.5 543 V536.5 M93.5 543 V540.3" stroke="#1a6cf0" stroke-width="1.2"/>
<path d="M83 544.8 H96" stroke="#111" stroke-width="1.4"/>
<path d="M111.3 531.5 V544.8 H124.5" stroke="#111" stroke-width="1.4" fill="none"/>
<path d="M112.5 543.5 L124.2 532" stroke="#e8283a" stroke-width="1.2"/>
<text x="113.6" y="537.6" font-size="7.5" font-weight="bold" fill="#111">P</text>
<text x="119.8" y="543.4" font-size="7.5" font-weight="bold" fill="#111">P</text>
<path d="M139.4 531.5 V544.8 H152.4" stroke="#111" stroke-width="1.4" fill="none"/>
<path d="M140.5 543.5 L152.2 532" stroke="#e8283a" stroke-width="1.2"/>
<circle cx="143.5" cy="534.4" r="2.1" stroke="#111" stroke-width="1.3" fill="#ddd"/>
<circle cx="149.8" cy="540.6" r="2.1" stroke="#111" stroke-width="1.3" fill="#ddd"/>
<path d="M166.8 543 C170 542.6 170.4 538 171.1 534.2 C171.6 531.6 172.4 530.6 173.6 530.6 C174.8 530.6 175.6 531.6 176.1 534.2 C176.8 538 177.2 542.6 180.4 543 Z" fill="#e41e32"/>
<path d="M173.6 530.8 V542.8 M168.2 537.4 H179 M168.2 535.8 V539 M179 535.8 V539" stroke="#111" stroke-width="1.3"/>
<path d="M167 544.8 H180.3" stroke="#111" stroke-width="1.4"/>
<rect x="195" y="532" width="13" height="13" fill="#000"/><g fill="#fff"><rect x="196" y="533" width="3" height="2"/><rect x="200" y="533" width="3" height="2"/><rect x="204" y="533" width="3" height="2"/><rect x="196" y="536" width="3" height="2"/><rect x="200" y="536" width="3" height="2"/><rect x="204" y="536" width="3" height="2"/><rect x="196" y="539" width="3" height="2"/><rect x="200" y="539" width="3" height="2"/><rect x="204" y="539" width="3" height="2"/><rect x="196" y="542" width="3" height="2"/><rect x="200" y="542" width="3" height="2"/><rect x="204" y="542" width="3" height="2"/></g>
<path d="M596.8 533.6 H593.6 V544.3 H604.8 V541.2" stroke="#111" stroke-width="1.4" fill="none"/>
<path d="M596.6 540.6 Q597.2 534.8 603.6 534.6" stroke="#2f86f5" stroke-width="2.2" fill="none"/>
<path d="M603.4 531 L607.4 534.6 L603.4 538.4 Z" fill="#2f86f5"/>
</svg>
<svg class="a" style="left:0;top:0" width="778" height="30" viewBox="0 0 778 30">
<rect x="691" y="15" width="9" height="2" fill="#65676e"/>
<rect x="722.8" y="10.9" width="7.6" height="5.2" stroke="#65676e" stroke-width="1.6" fill="none"/><rect x="722" y="10" width="9.2" height="2" fill="#65676e"/>
<path d="M754 10.8 L761.6 16.8 M761.6 10.8 L754 16.8" stroke="#65676e" stroke-width="2.1"/>
</svg><!--/BTNS-->
<!--CALL--><div class="a callout" style="left:69px;top:449px;width:42px;height:44px;border:6px solid #ff0000;color:#ff0000;line-height:32px">1</div>
<div class="a callout" style="left:269px;top:86px;width:42px;height:44px;border:6px solid #ff0000;color:#ff0000;line-height:32px">2</div>
<div class="a callout" style="left:506px;top:317px;width:40px;height:43px;border:6px solid #ff0000;color:#ff0000;line-height:31px">3</div>
<div class="a callout" style="left:661px;top:351px;width:40px;height:44px;border:6px solid #ff0000;color:#ff0000;line-height:32px">4</div>
<div class="a callout" style="left:397px;top:430px;width:41px;height:44px;border:6px solid #0000ff;color:#0000ff;line-height:32px">5</div><!--/CALL-->
</body></html>
